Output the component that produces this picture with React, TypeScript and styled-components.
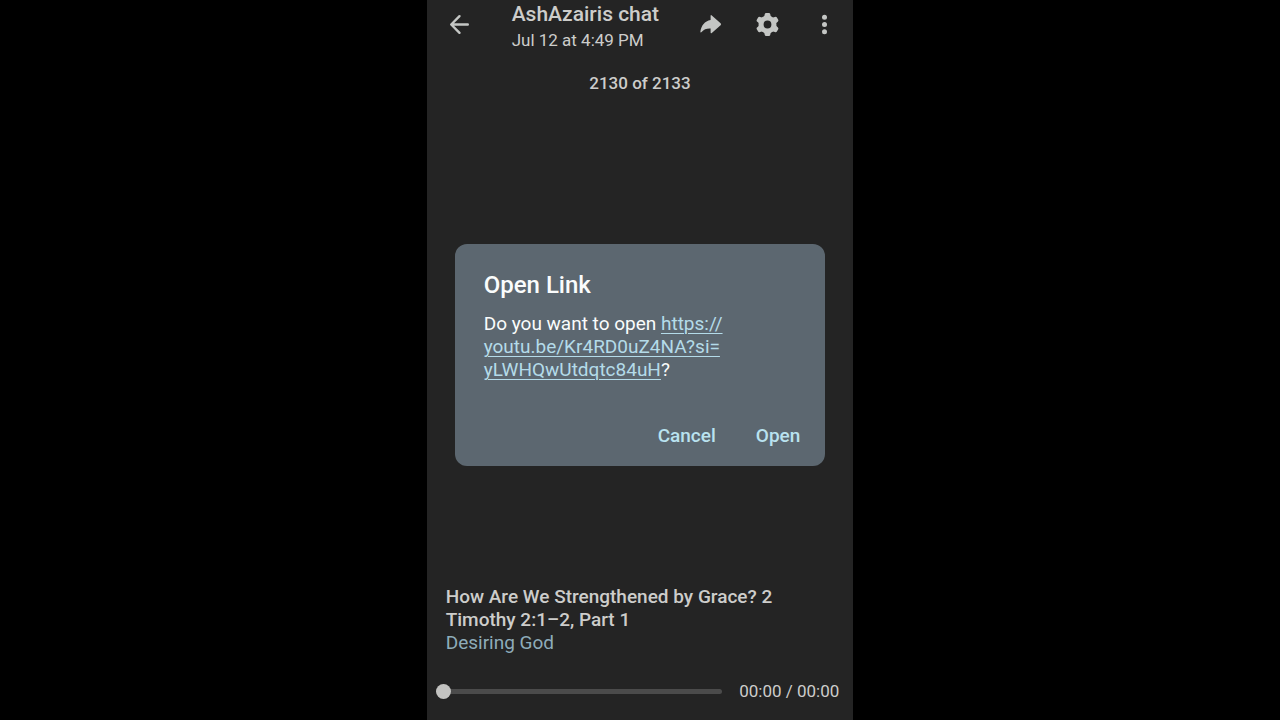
import React, { useState } from "react";
import styled, { createGlobalStyle } from "styled-components";

const GlobalStyle = createGlobalStyle`
  * { box-sizing: border-box; }
  body { margin: 0; background: #000; font-family: Roboto, sans-serif; }
  button { font-family: inherit; border: 0; background: none; padding: 0; cursor: pointer; }
  h1, h2, p { margin: 0; }
`;

const Stage = styled.div`
  display: flex;
  justify-content: center;
  min-height: 100vh;
  background: #000;
`;

const Phone = styled.main`
  position: relative;
  display: flex;
  flex-direction: column;
  width: 33.333%;
  min-width: 400px;
  background: #242424;
  color: #cdcdcb;
`;

const TopBar = styled.header`
  display: flex;
  align-items: center;
  height: 48px;
  padding: 0 16px 0 20px;
`;

const Heading = styled.div`
  flex: 1;
  padding: 6px 0 0 40px;
  white-space: nowrap;
`;

const ChatName = styled.h1`
  font-size: 21px;
  line-height: 26px;
  font-weight: 500;
`;

const ChatDate = styled.p`
  font-size: 17px;
  line-height: 26px;
`;

const Actions = styled.div`
  display: flex;
  gap: 32px;
`;

const IconButton = styled.button`
  display: grid;
  place-items: center;
  width: 25px;
  height: 25px;
  color: #c4c6c4;

  svg {
    display: block;
    width: 100%;
    height: 100%;
    fill: currentColor;
  }
`;

const Counter = styled.p`
  padding-top: 24px;
  text-align: center;
  font-size: 17px;
  line-height: 22px;
  font-weight: 500;
`;

const Footer = styled.footer`
  margin-top: auto;
  padding: 0 14px 17px 9px;
`;

const Caption = styled.div`
  padding: 0 40px 0 10px;
  font-size: 19px;
  line-height: 23px;
`;

const VideoTitle = styled.p`
  font-weight: 500;
`;

const Channel = styled.p`
  color: #8eacba;
`;

const Player = styled.div`
  display: flex;
  align-items: center;
  gap: 17px;
  padding-top: 25px;
`;

const Seek = styled.input`
  flex: 1;
  min-width: 0;
  height: 16px;
  margin: 0;
  appearance: none;
  background: transparent;

  &::-webkit-slider-runnable-track {
    height: 5px;
    border-radius: 3px;
    background: #4b4b4b;
  }

  &::-webkit-slider-thumb {
    appearance: none;
    width: 15px;
    height: 15px;
    margin-top: -5px;
    border-radius: 50%;
    background: #c3c3c1;
  }
`;

const Time = styled.span`
  font-size: 17px;
  line-height: 24px;
  white-space: nowrap;
`;

const Overlay = styled.div`
  position: absolute;
  inset: 0;
  display: flex;
  align-items: center;
  padding: 0 28px 10px;
`;

const Dialog = styled.section`
  width: 100%;
  padding: 24px 17px 15px 29px;
  border-radius: 12px;
  background: #5c6770;
  color: #fafcfc;
`;

const DialogTitle = styled.h2`
  font-size: 24px;
  line-height: 34px;
  font-weight: 500;
`;

const DialogText = styled.p`
  padding-top: 10px;
  font-size: 19px;
  line-height: 23px;
`;

const Link = styled.a`
  color: #b4dbe9;
  text-decoration: underline;
  text-decoration-thickness: 1px;
  text-underline-offset: 3px;
`;

const DialogActions = styled.div`
  display: flex;
  justify-content: flex-end;
  gap: 24px;
  padding-top: 38px;
`;

const TextButton = styled.button`
  && {
    padding: 0 8px;
  }
  height: 32px;
  color: #b9e2ef;
  font-size: 19px;
  font-weight: 500;
`;

const TOOTH_ANGLES = [0, 60, 120, 180, 240, 300];

function GearIcon() {
  return (
    <svg viewBox="-12.5 -12.5 25 25">
      <circle r="6.4" fill="none" stroke="currentColor" strokeWidth="5" />
      {TOOTH_ANGLES.map((angle) => (
        <path
          key={angle}
          transform={`rotate(${angle})`}
          d="M-4.600-7.200C-3.200-7.900-3-8.700-2.800-10.200Q-2.600-11.600-1.300-11.600H1.300Q2.600-11.600 2.800-10.200C3-8.700 3.200-7.900 4.600-7.200L3-5H-3z"
        />
      ))}
    </svg>
  );
}

export default function App() {
  const [position, setPosition] = useState(0);

  return (
    <Stage>
      <GlobalStyle />
      <Phone>
        <TopBar>
          <IconButton aria-label="Back">
            <svg viewBox="0 0 25 25">
              <path
                d="M20.800 12.500H4.500M12.500 4.200L4.200 12.500l8.300 8.300"
                fill="none"
                stroke="currentColor"
                strokeWidth="2.400"
                strokeLinecap="round"
                strokeLinejoin="round"
              />
            </svg>
          </IconButton>
          <Heading>
            <ChatName>AshAzairis chat</ChatName>
            <ChatDate>Jul 12 at 4:49 PM</ChatDate>
          </Heading>
          <Actions>
            <IconButton aria-label="Share">
              <svg viewBox="0 0 25 25">
                <path d="M12.600 3.900q0-1.400 1.200-.5l8.800 7.900q1 1 0 2l-8.800 7.600q-1.200.8-1.200-.5v-3.900C8.600 16.300 5.900 17.300 3.600 20.100c-.6.700-1.400.5-1.200-.5.900-6.100 4.300-10.400 10.200-11.600z" />
              </svg>
            </IconButton>
            <IconButton aria-label="Settings">
              <GearIcon />
            </IconButton>
            <IconButton aria-label="More options">
              <svg viewBox="0 0 25 25">
                <circle cx="12.500" cy="5.300" r="2.500" />
                <circle cx="12.500" cy="12.500" r="2.500" />
                <circle cx="12.500" cy="19.700" r="2.500" />
              </svg>
            </IconButton>
          </Actions>
        </TopBar>
        <Counter>2130 of 2133</Counter>

        <Footer>
          <Caption>
            <VideoTitle>How Are We Strengthened by Grace? 2 Timothy 2:1–2, Part 1</VideoTitle>
            <Channel>Desiring God</Channel>
          </Caption>
          <Player>
            <Seek
              type="range"
              aria-label="Seek"
              min={0}
              max={100}
              value={position}
              onChange={(e) => setPosition(Number(e.target.value))}
            />
            <Time>00:00 / 00:00</Time>
          </Player>
        </Footer>

        <Overlay>
          <Dialog role="dialog" aria-labelledby="dialog-title">
            <DialogTitle id="dialog-title">Open Link</DialogTitle>
            <DialogText>
              Do you want to open{" "}
              <Link href="https://youtu.be/Kr4RD0uZ4NA?si=yLWHQwUtdqtc84uH">
                https://
                <br />
                youtu.be/Kr4RD0uZ4NA?si=
                <br />
                yLWHQwUtdqtc84uH
              </Link>
              ?
            </DialogText>
            <DialogActions>
              <TextButton>Cancel</TextButton>
              <TextButton>Open</TextButton>
            </DialogActions>
          </Dialog>
        </Overlay>
      </Phone>
    </Stage>
  );
}
